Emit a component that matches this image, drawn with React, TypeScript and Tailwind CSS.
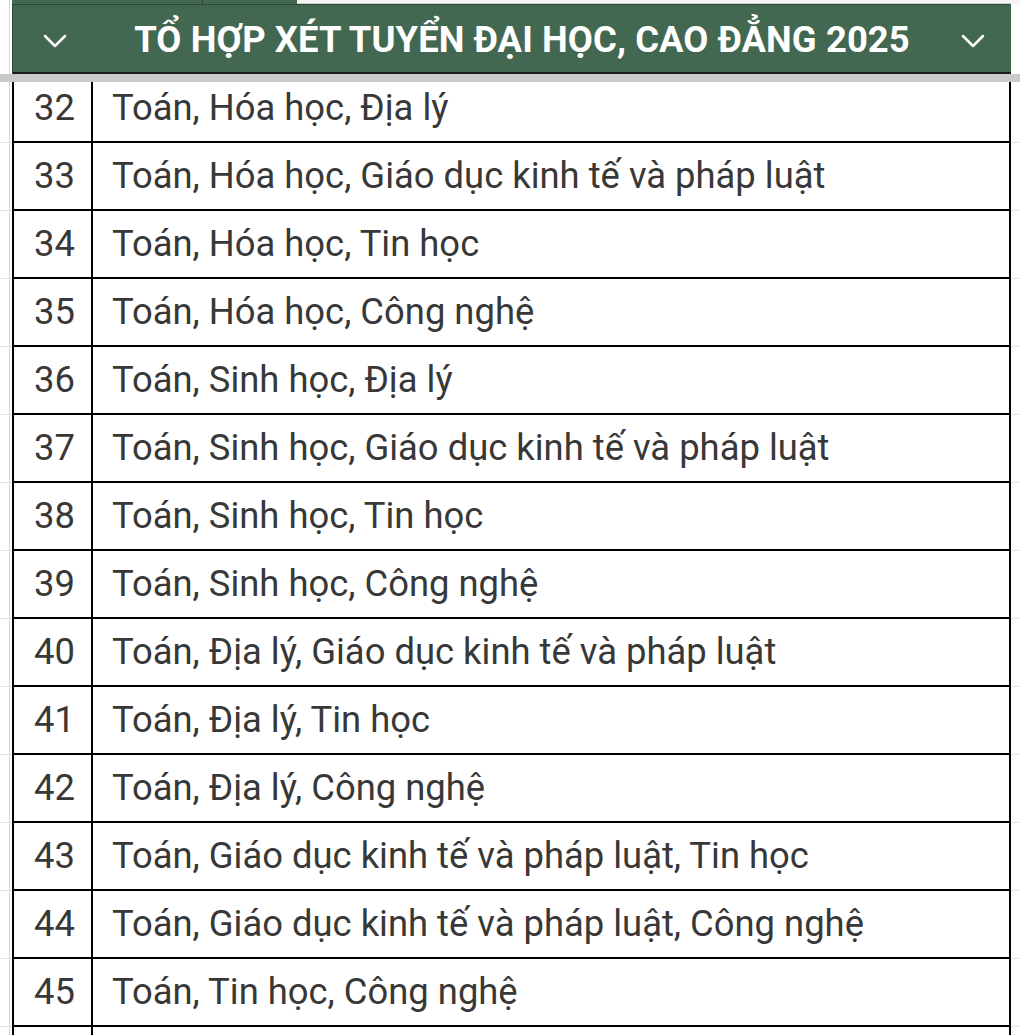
import { ChevronDown } from "lucide-react";

const rows: [number, string][] = [
  [32, "Toán, Hóa học, Địa lý"],
  [33, "Toán, Hóa học, Giáo dục kinh tế và pháp luật"],
  [34, "Toán, Hóa học, Tin học"],
  [35, "Toán, Hóa học, Công nghệ"],
  [36, "Toán, Sinh học, Địa lý"],
  [37, "Toán, Sinh học, Giáo dục kinh tế và pháp luật"],
  [38, "Toán, Sinh học, Tin học"],
  [39, "Toán, Sinh học, Công nghệ"],
  [40, "Toán, Địa lý, Giáo dục kinh tế và pháp luật"],
  [41, "Toán, Địa lý, Tin học"],
  [42, "Toán, Địa lý, Công nghệ"],
  [43, "Toán, Giáo dục kinh tế và pháp luật, Tin học"],
  [44, "Toán, Giáo dục kinh tế và pháp luật, Công nghệ"],
  [45, "Toán, Tin học, Công nghệ"],
];

function Row({ num, text }: { num: number | null; text: string }) {
  return (
    <div className="flex h-[68px] shrink-0">
      {/* gutter outside the table */}
      <div className="w-[12px] h-full border-b border-[#e2e2e2]">
        <div className="w-[10px] h-full border-r border-[#d4d4d4]" />
      </div>
      <div className="flex flex-1 h-full border-l-2 border-r-2 border-b-2 border-black">
        <div className="w-[79px] h-full flex items-center justify-end pr-[16px] border-r-2 border-black text-[36.4px] text-[#383838]">
          {num}
        </div>
        <div className="flex-1 h-full flex items-center pl-[19px] text-[36.4px] text-[#383838] whitespace-nowrap">
          {text}
        </div>
      </div>
      <div className="w-[9px] h-full border-b border-[#e2e2e2]" />
    </div>
  );
}

export default function App() {
  return (
    <div
      className="w-[1020px] h-[1035px] overflow-hidden bg-white flex flex-col"
      style={{ fontFamily: "Roboto, 'Noto Sans', sans-serif" }}
    >
      {/* strip of the row above */}
      <div className="flex h-[4px] shrink-0">
        <div className="w-[12px] h-full">
          <div className="w-[10px] h-full border-r border-[#d4d4d4]" />
        </div>
        <div className="w-[191px] h-full bg-[#436852] border-r border-[#2c4636]" />
        <div className="w-[94px] h-full bg-[#436852]" />
        <div className="w-[714px] h-full bg-[#f4f4f4] border-b border-[#d0d0d0]" />
        <div className="flex-1 h-full bg-[#f4f4f4]" />
      </div>

      {/* header */}
      <div className="flex h-[70px] shrink-0">
        <div className="w-[12px] h-full">
          <div className="w-[10px] h-full border-r border-[#d4d4d4]" />
        </div>
        <div className="w-[999px] h-full bg-[#436852] border-l border-t border-[#2c4636] border-b-2 border-b-[#1c1c1c] flex items-center text-white">
          <div className="w-[96px] flex items-center pl-[22px] mt-[5px]">
            <ChevronDown size={40} strokeWidth={1.5} />
          </div>
          <div className="flex-1 text-center font-bold text-[36.4px] tracking-[0.1px] whitespace-nowrap pt-[3px]">
            TỔ HỢP XÉT TUYỂN ĐẠI HỌC, CAO ĐẲNG 2025
          </div>
          <div className="w-[76px] flex items-center justify-center mt-[5px]">
            <ChevronDown size={40} strokeWidth={1.5} />
          </div>
        </div>
        <div className="flex-1 h-full" />
      </div>

      {/* frozen divider */}
      <div className="h-[8px] shrink-0 bg-[#c9c9c9]" />

      {/* body */}
      <div className="flex-1 overflow-hidden">
        <div className="-mt-[7px] flex flex-col">
          {rows.map(([n, t]) => (
            <Row key={n} num={n} text={t} />
          ))}
          <Row num={null} text="" />
        </div>
      </div>
    </div>
  );
}
